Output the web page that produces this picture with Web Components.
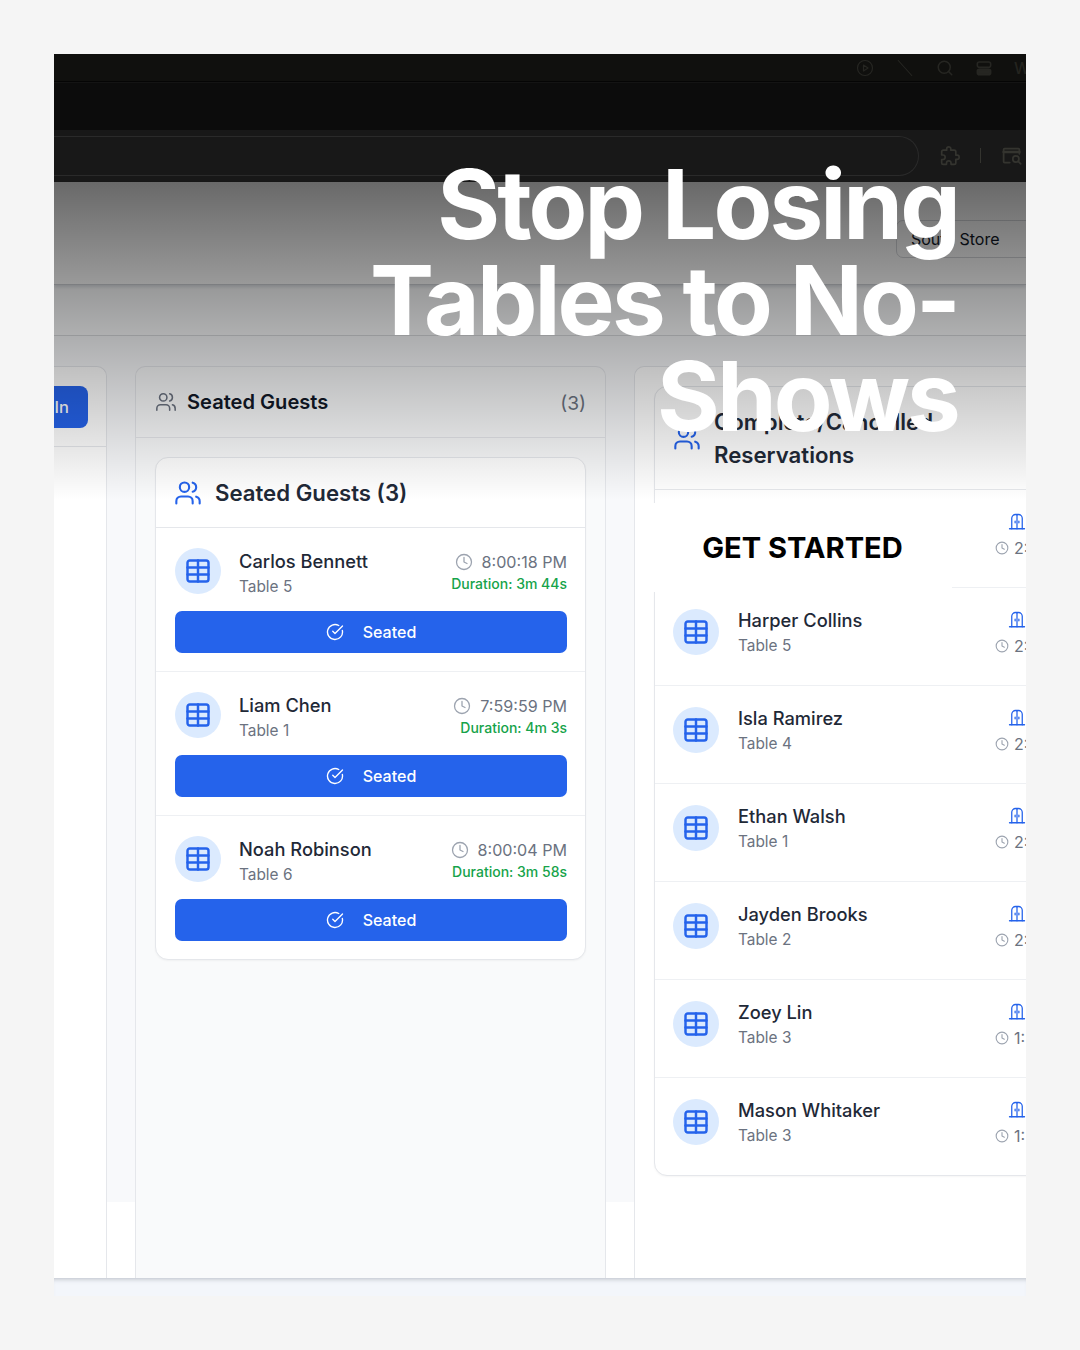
<!DOCTYPE html>
<html>
<head>
<meta charset="utf-8">
<title>Stop Losing Tables to No-Shows</title>
<style>
  html, body { margin: 0; padding: 0; background: #f5f5f5; }
  body { padding: 54px; width: 972px; font-family: Inter, "Liberation Sans", sans-serif; }
</style>
</head>
<body>
<app-frame>
  <browser-chrome slot="top"></browser-chrome>
  <store-bar slot="top"></store-bar>
  <store-nav slot="top"></store-nav>

  <checkin-column></checkin-column>

  <guest-column>
    <guest-card heading="Seated Guests (3)">
      <seated-row name="Carlos Bennett" table="Table 5" time="8:00:18 PM" duration="Duration: 3m 44s"></seated-row>
      <seated-row name="Liam Chen" table="Table 1" time="7:59:59 PM" duration="Duration: 4m 3s"></seated-row>
      <seated-row name="Noah Robinson" table="Table 6" time="8:00:04 PM" duration="Duration: 3m 58s"></seated-row>
    </guest-card>
  </guest-column>

  <cancelled-column>
    <guest-card heading="Complete/Cancelled Reservations" narrow>
      <cancelled-row time="2:"></cancelled-row>
      <cancelled-row name="Harper Collins" table="Table 5" time="2:"></cancelled-row>
      <cancelled-row name="Isla Ramirez" table="Table 4" time="2:"></cancelled-row>
      <cancelled-row name="Ethan Walsh" table="Table 1" time="2:"></cancelled-row>
      <cancelled-row name="Jayden Brooks" table="Table 2" time="2:"></cancelled-row>
      <cancelled-row name="Zoey Lin" table="Table 3" time="1:"></cancelled-row>
      <cancelled-row name="Mason Whitaker" table="Table 3" time="1:"></cancelled-row>
    </guest-card>
  </cancelled-column>

  <hero-overlay slot="over"></hero-overlay>
</app-frame>

<script>
const ICONS = {
  users: `<path d="M16 21v-2a4 4 0 0 0-4-4H6a4 4 0 0 0-4 4v2"/><circle cx="9" cy="7" r="4"/><path d="M22 21v-2a4 4 0 0 0-3-3.87"/><path d="M16 3.13a4 4 0 0 1 0 7.75"/>`,
  table: `<rect x="3" y="3" width="18" height="18" rx="2"/><path d="M3 9h18M3 15h18M12 3v18"/>`,
  clock: `<circle cx="12" cy="12" r="10"/><path d="M12 6v6l4 2"/>`,
  check: `<path d="M21.801 10A10 10 0 1 1 17 3.335"/><path d="m9 11 3 3L22 4"/>`,
  door: `<path d="M2 21h20"/><path d="M5 21V7a5 5 0 0 1 5-5h4a5 5 0 0 1 5 5v14"/><path d="M12 3v18"/><path d="M9.5 11v2M14.5 11v2"/>`,
  play: `<circle cx="12" cy="12" r="10"/><path d="M10 8l6 4-6 4z"/>`,
  search: `<circle cx="11" cy="11" r="8"/><path d="m21 21-4.3-4.3"/>`,
  slash: `<path d="M3 2l18 20"/>`,
  toggles: `<rect x="2" y="3" width="20" height="8" rx="3"/><rect x="2" y="14" width="20" height="8" rx="3" fill="currentColor"/>`,
  puzzle: `<path d="M20.5 11H19V7a2 2 0 0 0-2-2h-4V3.5a2.5 2.5 0 0 0-5 0V5H4a2 2 0 0 0-2 2v3.8h1.5a2.7 2.7 0 0 1 0 5.4H2V20a2 2 0 0 0 2 2h3.8v-1.5a2.7 2.7 0 0 1 5.4 0V22H17a2 2 0 0 0 2-2v-4h1.5a2.5 2.5 0 0 0 0-5z"/>`,
  lens: `<path d="M10 20H4a1 1 0 0 1-1-1V5a1 1 0 0 1 1-1h16a1 1 0 0 1 1 1v5"/><path d="M3 8h18" stroke-width="3"/><circle cx="17" cy="16" r="3.5"/><path d="m20 19 2.5 2.5"/>`,
};

class UiIcon extends HTMLElement {
  get name() {
    return this.getAttribute("name");
  }
  get size() {
    return this.getAttribute("size") || 24;
  }
  get stroke() {
    return this.getAttribute("stroke") || 2;
  }
  constructor() {
    super();
    this.attachShadow({ mode: "open" });
  }
  connectedCallback() {
    this.shadowRoot.innerHTML = `
      <style>
        :host { display: inline-flex; flex: none; }
        svg { display: block; fill: none; stroke: currentColor; stroke-linecap: round; stroke-linejoin: round; }
      </style>
      <svg width="${this.size}" height="${this.size}" viewBox="0 0 24 24" stroke-width="${this.stroke}">${ICONS[this.name]}</svg>`;
  }
}
customElements.define("ui-icon", UiIcon);

class AppFrame extends HTMLElement {
  constructor() {
    super();
    this.attachShadow({ mode: "open" }).innerHTML = `
      <style>
        :host { display: block; position: relative; width: 972px; height: 1242px; overflow: hidden; }
        .shell { display: flex; flex-direction: column; height: 100%; }
        main {
          flex: 1; min-height: 0; display: grid; grid-template-columns: 53px 471px 510px; gap: 28px;
          padding-top: 30px; box-sizing: border-box;
          background: linear-gradient(#f8f9fb 866px, #fff 866px);
        }
        footer { height: 18px; flex: none; background: #f3f6fb; box-shadow: inset 0 5px 5px -4px rgba(90,95,110,.38); }
      </style>
      <div class="shell">
        <slot name="top"></slot>
        <main><slot></slot></main>
        <footer></footer>
      </div>
      <slot name="over"></slot>`;
  }
}
customElements.define("app-frame", AppFrame);

class BrowserChrome extends HTMLElement {
  constructor() {
    super();
    this.attachShadow({ mode: "open" }).innerHTML = `
      <style>
        :host { display: block; height: 128px; color: #262622; }
        .menu { height: 27px; background: #10100e; border-bottom: 1px solid #050505; display: flex; align-items: center; justify-content: flex-end; overflow: hidden; }
        .items { display: flex; align-items: center; gap: 22px; width: 170px; flex: none; }
        .items span { font: 500 16px Inter, sans-serif; color: #24241f; }
        .tabs { height: 47px; background: #0c0c0c; border-top: 1px solid #141414; }
        .address { height: 52px; background: #181818; display: flex; align-items: center; padding-bottom: 6px; box-sizing: border-box; }
        .pill { width: 866px; height: 40px; margin-left: -1px; margin-top: 5px; flex: none; box-sizing: border-box; border: 1px solid #2a2a2a; border-left: 0; border-radius: 0 20px 20px 0; }
        .tools { display: flex; align-items: center; margin-left: 21px; color: #34342f; margin-top: 5px; }
        .sep { width: 1px; height: 15px; background: #34342f; margin: 0 20px; }
      </style>
      <div class="menu">
        <div class="items">
          <ui-icon name="play" size="18" stroke="1.6"></ui-icon>
          <ui-icon name="slash" size="18" stroke="1.4"></ui-icon>
          <ui-icon name="search" size="18" stroke="2"></ui-icon>
          <ui-icon name="toggles" size="16" stroke="2.4"></ui-icon>
          <span>W</span>
        </div>
      </div>
      <div class="tabs"></div>
      <div class="address">
        <div class="pill"></div>
        <div class="tools">
          <ui-icon name="puzzle" size="20" stroke="2"></ui-icon>
          <div class="sep"></div>
          <ui-icon name="lens" size="21" stroke="2"></ui-icon>
        </div>
      </div>`;
  }
}
customElements.define("browser-chrome", BrowserChrome);

class StoreBar extends HTMLElement {
  constructor() {
    super();
    this.attachShadow({ mode: "open" }).innerHTML = `
      <style>
        :host { display: block; height: 103px; box-sizing: border-box; background: #fff; border-bottom: 1px solid #cfd1d6; box-shadow: 0 2px 3px rgba(30,40,70,.14); position: relative; }
        .bar { display: flex; justify-content: flex-end; padding-top: 38px; }
        .select {
          width: 150px; margin-right: -20px; height: 38px; box-sizing: border-box; padding-left: 14px;
          display: flex; align-items: center; border: 1px solid #d6d8dc; border-radius: 7px;
          font: 400 16px Inter, sans-serif; color: #111827;
        }
      </style>
      <div class="bar"><div class="select">South Store</div></div>`;
  }
}
customElements.define("store-bar", StoreBar);

class StoreNav extends HTMLElement {
  constructor() {
    super();
    this.attachShadow({ mode: "open" }).innerHTML = `
      <style>
        :host { display: block; height: 51px; box-sizing: border-box; background: #fbfcfd; border-bottom: 1px solid #d9dbde; }
      </style>`;
  }
}
customElements.define("store-nav", StoreNav);

class CheckinColumn extends HTMLElement {
  constructor() {
    super();
    this.attachShadow({ mode: "open" }).innerHTML = `
      <style>
        :host { display: block; background: #fff; border: 1px solid #e5e7eb; border-width: 1px 1px 0 0; border-top-right-radius: 10px; }
        header { height: 80px; box-sizing: border-box; border-bottom: 1px solid #e5e7eb; padding: 19px 18px 0 0; display: flex; justify-content: flex-end; }
        .btn {
          height: 42px; flex: 1; box-sizing: border-box; padding-right: 19px; display: flex; align-items: center; justify-content: flex-end;
          background: #2563eb; color: #fff; border-radius: 0 8px 8px 0; font: 500 16.5px Inter, sans-serif;
        }
      </style>
      <header><div class="btn">In</div></header>`;
  }
}
customElements.define("checkin-column", CheckinColumn);

class GuestColumn extends HTMLElement {
  constructor() {
    super();
    this.attachShadow({ mode: "open" }).innerHTML = `
      <style>
        :host { display: block; background: #f9fafb; border: 1px solid #e5e7eb; border-bottom: 0; border-radius: 10px 10px 0 0; }
        header { height: 71px; box-sizing: border-box; border-bottom: 1px solid #e5e7eb; padding: 0 19px; display: flex; align-items: center; gap: 10px; }
        h2 { margin: 0; flex: 1; font: 600 20.1px Inter, sans-serif; color: #111827; }
        ui-icon { color: #6b7280; }
        .count { margin-top: 2px; font: 400 19.2px Inter, sans-serif; color: #6b7280; }
        .body { padding: 19px 19px 0; }
      </style>
      <header><ui-icon name="users" size="22" stroke="1.7"></ui-icon><h2>Seated Guests</h2><span class="count">(3)</span></header>
      <div class="body"><slot></slot></div>`;
  }
}
customElements.define("guest-column", GuestColumn);

class CancelledColumn extends HTMLElement {
  constructor() {
    super();
    this.attachShadow({ mode: "open" }).innerHTML = `
      <style>
        :host { display: block; background: #fff; border: 1px solid #e5e7eb; border-bottom: 0; border-radius: 10px 10px 0 0; padding: 19px 19px 0; }
      </style>
      <slot></slot>`;
  }
}
customElements.define("cancelled-column", CancelledColumn);

class GuestCard extends HTMLElement {
  get heading() {
    return this.getAttribute("heading");
  }
  constructor() {
    super();
    this.attachShadow({ mode: "open" });
  }
  connectedCallback() {
    this.shadowRoot.innerHTML = `
      <style>
        :host { display: block; background: #fff; border: 1px solid #e5e7eb; border-radius: 13px; overflow: hidden; box-shadow: 0 1px 2px rgba(0,0,0,.04); }
        header { height: 70px; box-sizing: border-box; border-bottom: 1px solid #e5e7eb; padding: 0 18px; display: flex; align-items: center; gap: 13px; }
        :host([narrow]) header { height: 103px; }
        h3 { margin: 0; font: 600 22.2px/33px Inter, sans-serif; color: #1f2937; }
        :host([narrow]) h3 { width: 260px; }
        ui-icon { color: #2563eb; }
      </style>
      <header><ui-icon name="users" size="28" stroke="1.8"></ui-icon><h3>${this.heading}</h3></header>
      <slot></slot>`;
  }
}
customElements.define("guest-card", GuestCard);

class TableBadge extends HTMLElement {
  constructor() {
    super();
    this.attachShadow({ mode: "open" }).innerHTML = `
      <style>
        :host { display: flex; flex: none; width: 46px; height: 46px; border-radius: 50%; background: #dbeafe; color: #2563eb; align-items: center; justify-content: center; }
      </style>
      <ui-icon name="table" size="28" stroke="2.1"></ui-icon>`;
  }
}
customElements.define("table-badge", TableBadge);

class SeatedRow extends HTMLElement {
  get name() {
    return this.getAttribute("name");
  }
  get table() {
    return this.getAttribute("table");
  }
  get time() {
    return this.getAttribute("time");
  }
  get duration() {
    return this.getAttribute("duration");
  }
  constructor() {
    super();
    this.attachShadow({ mode: "open" });
  }
  connectedCallback() {
    this.shadowRoot.innerHTML = `
      <style>
        :host { display: block; padding: 20px 18px 18px 19px; border-bottom: 1px solid #eef0f3; }
        :host(:last-child) { border-bottom: 0; }
        .top { display: flex; align-items: center; height: 46px; gap: 18px; }
        .who { flex: 1; padding-top: 5px; }
        .name { font: 500 18.3px/25px Inter, sans-serif; color: #1f2937; }
        .table { font: 400 15.4px/25px Inter, sans-serif; color: #6b7280; }
        .when { text-align: right; padding-top: 3px; }
        .time { display: flex; align-items: center; justify-content: flex-end; gap: 9px; font: 400 16.1px/21px Inter, sans-serif; color: #6b7280; }
        .time ui-icon { color: #9ca3af; }
        .duration { font: 500 14px/21px Inter, sans-serif; color: #16a34a; }
        .btn {
          margin-top: 17px; height: 42px; display: flex; align-items: center; justify-content: center; gap: 19px;
          background: #2563eb; color: #fff; border-radius: 7px; font: 500 16px Inter, sans-serif;
        }
      </style>
      <div class="top">
        <table-badge></table-badge>
        <div class="who"><div class="name">${this.name}</div><div class="table">${this.table}</div></div>
        <div class="when">
          <div class="time"><ui-icon name="clock" size="18" stroke="1.7"></ui-icon>${this.time}</div>
          <div class="duration">${this.duration}</div>
        </div>
      </div>
      <div class="btn"><ui-icon name="check" size="18" stroke="1.8"></ui-icon>Seated</div>`;
  }
}
customElements.define("seated-row", SeatedRow);

class CancelledRow extends HTMLElement {
  get name() {
    return this.getAttribute("name") || "";
  }
  get table() {
    return this.getAttribute("table") || "";
  }
  get time() {
    return this.getAttribute("time");
  }
  constructor() {
    super();
    this.attachShadow({ mode: "open" });
  }
  connectedCallback() {
    this.shadowRoot.innerHTML = `
      <style>
        :host { display: block; height: 98px; box-sizing: border-box; padding: 18px 18px 0; border-bottom: 1px solid #eef0f3; }
        :host(:last-child) { border-bottom: 0; height: 97px; }
        .top { display: flex; align-items: center; height: 51px; gap: 19px; }
        .who { width: 238px; padding-top: 2px; }
        .name { font: 500 18.3px/26px Inter, sans-serif; color: #1f2937; }
        .table { font: 400 15.4px/25px Inter, sans-serif; color: #6b7280; }
        .when { padding-top: 2px; }
        .door { height: 26px; padding-left: 13px; display: flex; align-items: center; color: #2563eb; }
        .time { height: 25px; display: flex; align-items: center; gap: 5px; font: 400 16px Inter, sans-serif; color: #6b7280; }
        .time ui-icon { color: #9ca3af; }
      </style>
      <div class="top">
        <table-badge></table-badge>
        <div class="who"><div class="name">${this.name}</div><div class="table">${this.table}</div></div>
        <div class="when">
          <div class="door"><ui-icon name="door" size="18" stroke="1.7"></ui-icon></div>
          <div class="time"><ui-icon name="clock" size="14" stroke="1.9"></ui-icon>${this.time}</div>
        </div>
      </div>`;
  }
}
customElements.define("cancelled-row", CancelledRow);

class HeroOverlay extends HTMLElement {
  constructor() {
    super();
    this.attachShadow({ mode: "open" }).innerHTML = `
      <style>
        :host { position: absolute; inset: 0; display: block; pointer-events: none; }
        .shade { position: absolute; left: 0; right: 0; top: 128px; height: 318px; background: linear-gradient(rgba(0,0,0,.59), rgba(0,0,0,0)); }
        h1 {
          position: absolute; right: 68px; top: 102px; width: 640px; margin: 0; text-align: right;
          font: 700 96px/96px Inter, sans-serif; letter-spacing: -2.9px; color: #fff;
        }
        .cta {
          position: absolute; left: 599px; top: 449px; width: 299px; height: 89px; background: #fff;
          display: flex; align-items: center; justify-content: center;
          font: 700 29.1px Inter, sans-serif; color: #000;
        }
      </style>
      <div class="shade"></div>
      <h1>Stop Losing Tables to No-Shows</h1>
      <div class="cta">GET STARTED</div>`;
  }
}
customElements.define("hero-overlay", HeroOverlay);
</script>
</body>
</html>
